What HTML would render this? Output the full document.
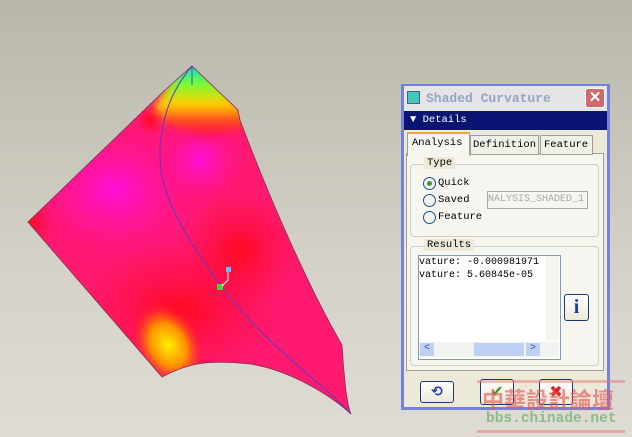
<!DOCTYPE html>
<html><head><style>
body{margin:0;width:632px;height:437px;overflow:hidden;background:linear-gradient(#b9b7ab,#d4d2c8 60%,#dedcd4);font-family:"Liberation Mono",monospace;position:relative}
.a{position:absolute}
.gb{position:absolute;border:1px solid #d0d0bf;border-radius:4px}
.lg{position:absolute;background:#ece9d8;padding:0 3px;font-size:10.5px;color:#000}
.rad{position:absolute;width:11px;height:11px;border:1px solid #1c5180;border-radius:50%;background:#f4f4f0}
.t{font-size:10.5px;position:absolute;white-space:nowrap}
.btn{position:absolute;border:1px solid #1c3a6e;border-radius:3px;background:linear-gradient(#fff,#ece9d8)}
</style></head><body>
<svg class="a" style="left:0;top:0" width="400" height="437">
<defs>
<radialGradient id="m" cx="0.5" cy="0.5" r="0.5"><stop offset="0" stop-color="#ff10d8"/><stop offset="1" stop-color="#ff1080" stop-opacity="0"/></radialGradient>
<radialGradient id="y" cx="0.5" cy="0.5" r="0.5"><stop offset="0" stop-color="#ffee00"/><stop offset="0.5" stop-color="#ff9000"/><stop offset="1" stop-color="#ff1030" stop-opacity="0"/></radialGradient>
<radialGradient id="r" cx="0.5" cy="0.5" r="0.5"><stop offset="0" stop-color="#ff0a20"/><stop offset="1" stop-color="#ff0a40" stop-opacity="0"/></radialGradient>
<linearGradient id="tp" x1="0" y1="66" x2="0" y2="135" gradientUnits="userSpaceOnUse"><stop offset="0" stop-color="#00e0d0"/><stop offset="0.25" stop-color="#70ff30"/><stop offset="0.55" stop-color="#ffd000"/><stop offset="0.8" stop-color="#ff4020"/><stop offset="1" stop-color="#ff1050"/></linearGradient>
<filter id="bl"><feGaussianBlur stdDeviation="4"/></filter>
<clipPath id="c"><path id="sh" d="M192,66 L238,110 L240,120 C270,200 310,290 342,345 L343,360 C345,385 347,405 351,414 C330,395 290,370 250,364 C210,360 190,362 162,377 L28,222 L165,90 Z"/></clipPath>
</defs>
<g clip-path="url(#c)">
<rect x="0" y="0" width="400" height="437" fill="#ff1a70"/>
<ellipse cx="115" cy="190" rx="100" ry="80" fill="url(#m)"/>
<ellipse cx="200" cy="160" rx="50" ry="50" fill="url(#m)"/>
<ellipse cx="180" cy="310" rx="100" ry="70" fill="url(#r)"/>
<ellipse cx="240" cy="250" rx="60" ry="60" fill="url(#r)"/>
<ellipse cx="168" cy="345" rx="34" ry="46" fill="url(#y)" transform="rotate(-30 168 345)"/>
<ellipse cx="30" cy="222" rx="25" ry="30" fill="url(#r)"/>
<path d="M192,60 L245,110 L245,128 L210,138 L180,130 L150,115 L170,80 Z" fill="url(#tp)" filter="url(#bl)"/>
<ellipse cx="150" cy="120" rx="14" ry="16" fill="url(#r)"/>
</g>
<use href="#sh" fill="none" stroke="#803050" stroke-width="0.8"/>
<path d="M192,66 C172,90 162,115 160,150 C158,190 180,230 222,287 C270,350 320,380 351,414" fill="none" stroke="#5a3cc0" stroke-width="1"/>
<path d="M192,66 L192,85" stroke="#3060c0"/>
<rect x="217" y="284" width="6" height="6" fill="#30e030"/>
<rect x="226" y="267" width="5" height="5" fill="#60c0ff"/>
<path d="M222,286 L228,280 L228,272" stroke="#fff" fill="none"/>
</svg>

<div class="a" style="left:401px;top:84px;width:203px;height:321px;border:3px solid #7382da;border-top-width:2px;background:#ece9d8"></div>
<div class="a" style="left:404px;top:86px;width:203px;height:24px;background:#e6e5e5"></div>
<div class="a" style="left:407px;top:91px;width:11px;height:11px;background:#40c8c0;border:1px solid #506070"></div>
<div class="t" style="left:426px;top:91px;font-size:13px;font-weight:bold;color:#96a4c4">Shaded Curvature</div>
<div class="a" style="left:585px;top:88px;width:18px;height:18px;background:#d06a6a;border:1px solid #fff;border-radius:3px;color:#fff;font:bold 15px 'Liberation Sans';text-align:center;line-height:18px">✕</div>
<div class="a" style="left:404px;top:111px;width:203px;height:19px;background:#0a1472"></div>
<div class="t" style="left:410px;top:114px;color:#fff">▼ Details</div>
<div class="a" style="left:406px;top:153px;width:196px;height:216px;border:1px solid #a0a090;background:#f6f5ef"></div>
<div class="a" style="left:407px;top:132px;width:61px;height:22px;background:#f6f5ef;border:1px solid #a0a090;border-bottom:none;border-top:2px solid #f0a830"></div>
<div class="t" style="left:412px;top:137px">Analysis</div>
<div class="a" style="left:470px;top:135px;width:67px;height:18px;border:1px solid #a0a090;background:#f0efe8"></div>
<div class="t" style="left:473px;top:139px">Definition</div>
<div class="a" style="left:540px;top:135px;width:51px;height:18px;border:1px solid #a0a090;background:#f0efe8"></div>
<div class="t" style="left:544px;top:139px">Feature</div>
<div class="gb" style="left:410px;top:164px;width:187px;height:71px"></div>
<div class="lg" style="left:424px;top:157px">Type</div>
<div class="rad" style="left:423px;top:177px"><div class="a" style="left:3px;top:3px;width:5px;height:5px;border-radius:50%;background:#30a030"></div></div>
<div class="rad" style="left:423px;top:194px"></div>
<div class="rad" style="left:423px;top:211px"></div>
<div class="t" style="left:438px;top:177px">Quick</div>
<div class="t" style="left:438px;top:194px">Saved</div>
<div class="t" style="left:438px;top:211px">Feature</div>
<div class="a" style="left:487px;top:191px;width:99px;height:16px;border:1px solid #a8a8a0;color:#a8a8a8;font-size:10px;line-height:16px;overflow:hidden;white-space:nowrap">NALYSIS_SHADED_1</div>
<div class="gb" style="left:410px;top:246px;width:187px;height:118px"></div>
<div class="lg" style="left:424px;top:239px">Results</div>
<div class="a" style="left:418px;top:255px;width:141px;height:103px;border:1px solid #7f9db9;background:#fff"></div>
<div class="t" style="left:419px;top:257px;font-size:10px">vature: -0.000981971</div>
<div class="t" style="left:419px;top:270px;font-size:10px">vature: 5.60845e-05</div>
<div class="a" style="left:546px;top:256px;width:13px;height:85px;background:#f5f5f0"></div>
<div class="a" style="left:419px;top:342px;width:140px;height:15px;background:#f2f2f0"></div>
<div class="a" style="left:420px;top:343px;width:14px;height:13px;background:#c0d0f0;color:#3050b0;font-size:10px;text-align:center">&lt;</div>
<div class="a" style="left:474px;top:343px;width:50px;height:13px;background:#c0d0f4"></div>
<div class="a" style="left:526px;top:343px;width:14px;height:13px;background:#c0d0f0;color:#3050b0;font-size:10px;text-align:center">&gt;</div>
<div class="btn" style="left:564px;top:294px;width:23px;height:25px;text-align:center;color:#1a40b0;font:bold 20px 'Liberation Serif';line-height:25px">i</div>
<div class="btn" style="left:420px;top:381px;width:32px;height:20px;text-align:center;color:#2040c0;font:bold 14px 'DejaVu Sans';line-height:20px">⟲</div>
<div class="btn" style="left:480px;top:379px;width:32px;height:24px;text-align:center;color:#30a020;font:bold 16px 'DejaVu Sans';line-height:24px">✔</div>
<div class="btn" style="left:539px;top:379px;width:32px;height:24px;text-align:center;color:#e02020;font:bold 16px 'DejaVu Sans';line-height:24px">✖</div>
<div class="a" style="left:477px;top:380px;width:148px;height:3px;background:rgba(230,120,120,.5)"></div>
<div class="a" style="left:477px;top:430px;width:148px;height:3px;background:rgba(230,120,120,.5)"></div>
<div class="t" style="left:482px;top:383px;font:bold 22px 'Noto Sans CJK TC',sans-serif;color:rgba(230,90,90,.65)">中華設計論壇</div>
<div class="t" style="left:486px;top:411px;font:bold 14.5px 'Liberation Mono',monospace;color:rgba(120,180,120,.8)">bbs.chinade.net</div>
</body></html>
